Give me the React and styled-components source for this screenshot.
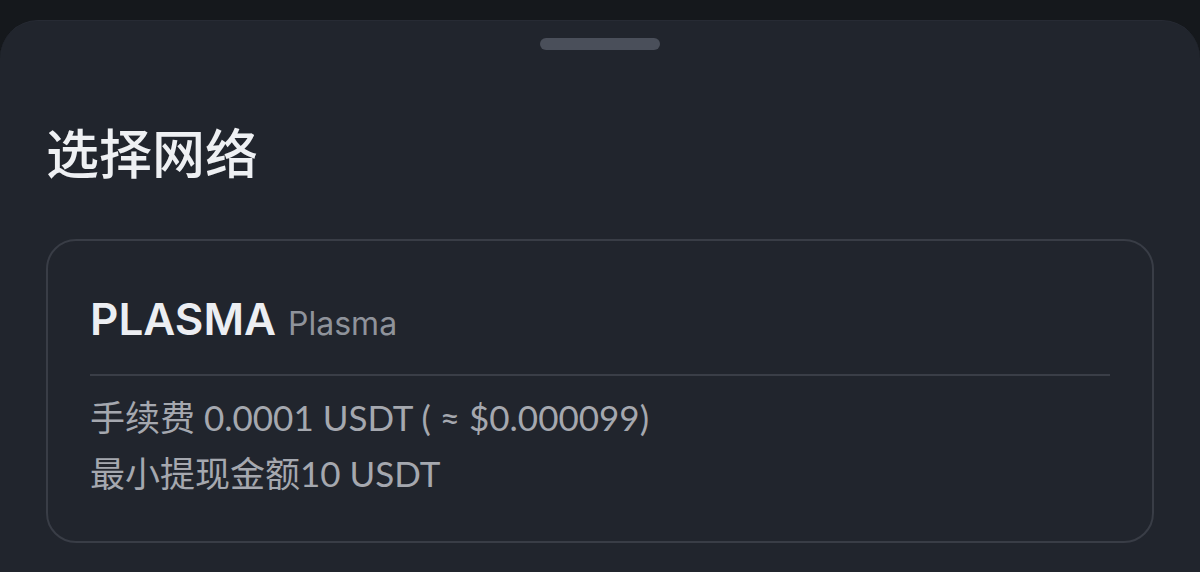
import React from 'react';
import styled, { createGlobalStyle } from 'styled-components';

const GlobalStyle = createGlobalStyle`
  html, body {
    margin: 0;
    padding: 0;
    background: #15181c;
  }
  body {
    font-family: "Inter", "Noto Sans CJK SC", sans-serif;
    -webkit-font-smoothing: antialiased;
  }
`;

const Sheet = styled.div`
  margin-top: 20px;
  height: 552px;
  box-sizing: border-box;
  background: #21252d;
  border-top: 1px solid #272b34;
  border-radius: 38px 38px 0 0;
  padding: 17px 46px 0;
  display: flex;
  flex-direction: column;
`;

const Handle = styled.div`
  align-self: center;
  width: 120px;
  height: 12px;
  border-radius: 6px;
  background: #4a4f5a;
`;

const Title = styled.h1`
  margin: 71px 0 0;
  font-family: "Noto Sans CJK SC", sans-serif;
  font-size: 53px;
  line-height: 60px;
  font-weight: 500;
  color: #eef0f3;
`;

const NetworkCard = styled.div`
  margin-top: 58px;
  border: 2px solid #393d46;
  border-radius: 30px;
  padding: 56px 42px 40px;
  display: flex;
  flex-direction: column;
`;

const NameRow = styled.div`
  display: flex;
  align-items: baseline;
  gap: 12px;
  padding-bottom: 33px;
  border-bottom: 2px solid #3a3e47;
`;

const Symbol = styled.span`
  font-size: 44px;
  line-height: 1;
  font-weight: 600;
  color: #eceef2;
`;

const Network = styled.span`
  font-size: 32px;
  line-height: 1;
  font-weight: 400;
  color: #8f939b;
`;

const InfoList = styled.div`
  margin-top: 13px;
  display: flex;
  flex-direction: column;
`;

const InfoLine = styled.div`
  font-family: "Lato", "Noto Sans CJK SC", sans-serif;
  font-size: 35px;
  line-height: 56px;
  color: #a5a8af;
`;

export default function App() {
  return (
    <>
      <GlobalStyle />
      <Sheet>
        <Handle />
        <Title>选择网络</Title>
        <NetworkCard>
          <NameRow>
            <Symbol>PLASMA</Symbol>
            <Network>Plasma</Network>
          </NameRow>
          <InfoList>
            <InfoLine>手续费 0.0001 USDT ( ≈ $0.000099)</InfoLine>
            <InfoLine>最小提现金额10 USDT</InfoLine>
          </InfoList>
        </NetworkCard>
      </Sheet>
    </>
  );
}
